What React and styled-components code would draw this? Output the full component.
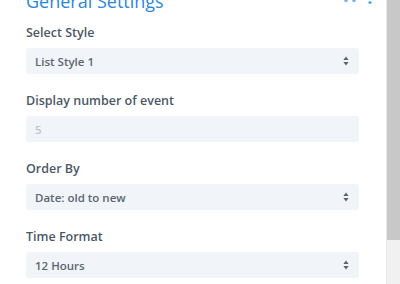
import React from 'react';
import styled, { createGlobalStyle } from 'styled-components';

const GlobalStyle = createGlobalStyle`
  html, body {
    margin: 0;
    padding: 0;
    background: #ffffff;
    overflow: hidden;
  }
  body {
    font-family: "Open Sans", "Noto Sans", sans-serif;
  }
`;

const Page = styled.div`
  display: flex;
  width: 400px;
  height: 284px;
  overflow: hidden;
`;

const Panel = styled.div`
  flex: 1;
  padding: 0 27px 0 26px;
  display: flex;
  flex-direction: column;
`;

const Header = styled.div`
  display: flex;
  align-items: flex-end;
  justify-content: space-between;
  margin-top: -13px;
  height: 30px;
`;

const Title = styled.h2`
  margin: 0;
  font-size: 18px;
  line-height: 31px;
  font-weight: 500;
  color: #2b87da;
`;

const HeaderIcons = styled.div`
  display: flex;
  align-items: flex-start;
  align-self: stretch;
  gap: 10px;
  margin-right: -13px;
  padding-top: 13px;
`;

const Field = styled.div`
  display: flex;
  flex-direction: column;
  margin-top: ${p => p.$first ? '7px' : '18px'};
`;

const Label = styled.label`
  font-size: 12.5px;
  line-height: 18px;
  font-weight: 600;
  color: #4c5866;
  margin-bottom: 6px;
`;

const Control = styled.div`
  display: flex;
  align-items: center;
  justify-content: space-between;
  height: 26px;
  padding: 0 10px 0 9px;
  background: #f1f5f9;
  border-radius: 3px;
  font-size: 11.5px;
  font-weight: 600;
  color: ${p => p.$placeholder ? '#bfc5cc' : '#5b6573'};
`;

const Scrollbar = styled.div`
  width: 13px;
  display: flex;
  flex-direction: column;
  background: #f1f1f1;
  border-left: 1px solid #e8e8e8;
`;

const Thumb = styled.div`
  height: 240px;
  background: #c8c8c8;
`;

const Arrows = () => (
  <svg width="6" height="10" viewBox="0 0 6 10">
    <path d="M3 0.5 L5.6 4 H0.4 Z" fill="#59636f" />
    <path d="M3 9.5 L5.6 6 H0.4 Z" fill="#59636f" />
  </svg>
);

const Dots = () => (
  <>
    <svg width="14" height="4" viewBox="0 0 14 4">
      <circle cx="2" cy="0.5" r="1.8" fill="#7fb2ec" />
      <circle cx="10" cy="0.5" r="1.8" fill="#7fb2ec" />
    </svg>
    <svg width="4" height="6" viewBox="0 0 4 6">
      <circle cx="2" cy="2.5" r="1.6" fill="#5e9fe6" />
    </svg>
  </>
);

const SelectField = ({ label, value, first }) => (
  <Field $first={first}>
    <Label>{label}</Label>
    <Control>
      <span>{value}</span>
      <Arrows />
    </Control>
  </Field>
);

const App = () => {
  return (
    <Page>
      <GlobalStyle />
      <Panel>
        <Header>
          <Title>General Settings</Title>
          <HeaderIcons>
            <Dots />
          </HeaderIcons>
        </Header>
        <SelectField first label="Select Style" value="List Style 1" />
        <Field>
          <Label>Display number of event</Label>
          <Control $placeholder>
            <span>5</span>
          </Control>
        </Field>
        <SelectField label="Order By" value="Date: old to new" />
        <SelectField label="Time Format" value="12 Hours" />
      </Panel>
      <Scrollbar>
        <Thumb />
      </Scrollbar>
    </Page>
  );
};

export default App;
